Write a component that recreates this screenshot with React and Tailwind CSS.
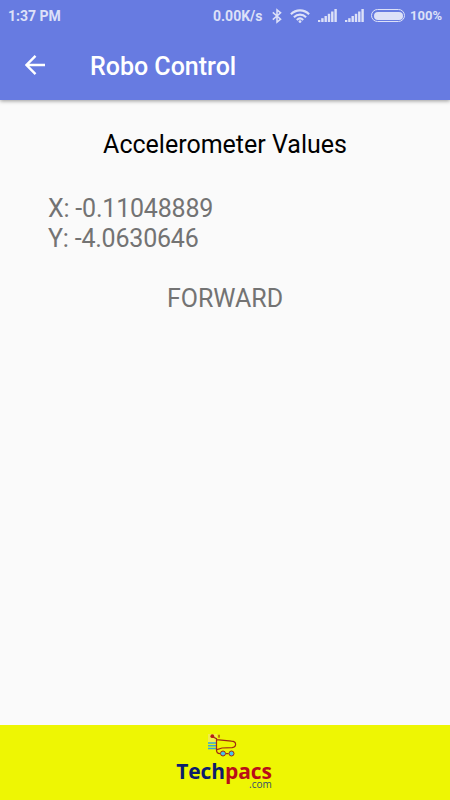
const BluetoothIcon = () => (
  <svg width="10" height="16" viewBox="0 0 10 16" fill="none" stroke="currentColor" strokeWidth="1.5">
    <path d="M0.8 4.4 8.6 11.2 5 14.2V1.8L8.6 4.8 0.8 11.6" />
  </svg>
);

const WifiIcon = () => (
  <svg width="20" height="14" viewBox="0 0 20 14" fill="none" stroke="currentColor" strokeWidth="2.1">
    <path d="M0.9 5.2C6 0.1 14 0.1 19.1 5.2" />
    <path d="M3.9 8.2C7.4 4.8 12.6 4.8 16.1 8.2" />
    <path d="M6.8 10.9C8.7 9.1 11.3 9.1 13.2 10.9" />
    <circle cx="10" cy="12.6" r="1.4" fill="currentColor" stroke="none" />
  </svg>
);

const SignalIcon = () => (
  <svg width="19" height="13" viewBox="0 0 19 13" fill="currentColor">
    <rect x="0" y="11" width="2.3" height="2" />
    <rect x="3.2" y="9.2" width="2.4" height="3.8" />
    <rect x="6.5" y="7" width="2.4" height="6" />
    <rect x="9.8" y="4.8" width="2.4" height="8.2" />
    <rect x="13.1" y="2.5" width="2.4" height="10.5" />
    <rect x="16.4" y="0" width="2.4" height="13" />
  </svg>
);

const BatteryIcon = () => (
  <div className="h-[13px] w-[34px] rounded-full border border-[#dde1f8] p-[1.5px]">
    <div className="h-full w-full rounded-full bg-[#dde1f8]" />
  </div>
);

const StatusBar = () => (
  <div className="flex h-[31px] items-center pl-2 text-[14px] font-bold text-[#dde1f8]">
    <span className="w-[205px] leading-none">1:37 PM</span>
    <span className="w-[59px] leading-none">0.00K/s</span>
    <BluetoothIcon />
    <div className="ml-2 flex items-center">
      <WifiIcon />
      <div className="ml-2 flex gap-2">
        <SignalIcon />
        <SignalIcon />
      </div>
    </div>
    <div className="ml-[7px]">
      <BatteryIcon />
    </div>
    <span className="ml-[5px] text-[13px] leading-none">100%</span>
  </div>
);

const AppBar = () => (
  <div className="flex h-[68px] items-center pl-[25px] text-white">
    <svg width="20" height="20" viewBox="0 0 20 20" fill="none" stroke="currentColor" strokeWidth="2.4">
      <path d="M20 10H2M10.5 0.9 1.5 10l9 9.1" />
    </svg>
    <h1 className="ml-[45px] pt-1 text-[25px] font-medium leading-[30px]">Robo Control</h1>
  </div>
);

const CartLogo = () => (
  <svg width="30" height="24" viewBox="0 0 30 24" fill="none">
    <rect x="1" y="1" width="9" height="9" fill="#f2ee4b" />
    <path d="M1 10h9M1 12.7h9M1 15.5h9" stroke="#35a9dc" strokeWidth="1.5" />
    <path
      d="M5.5 3.8 9.5 5.6V17c0 2.6 1.2 3.6 3.6 3.6M9.5 6.6 24.5 8.2c5.4 0.2 5.4 5.6 0.5 6.4l-10 0.4-5 1.6M19 20.6h2.6M12 1.8v3"
      stroke="#a12b12"
      strokeWidth="1.2"
    />
    <circle cx="5.3" cy="3.2" r="1.9" fill="#b51d16" />
    <circle cx="16" cy="20.5" r="2.5" fill="#45c0ee" stroke="#a12b12" strokeWidth="1" />
    <circle cx="24.5" cy="20.5" r="2.5" fill="#45c0ee" stroke="#a12b12" strokeWidth="1" />
  </svg>
);

const Footer = () => (
  <footer className="flex h-[75px] flex-col items-center bg-[#eef603] pt-2 font-['Open_Sans',sans-serif]">
    <div className="mr-[6px]">
      <CartLogo />
    </div>
    <div className="relative mr-[2px] text-[21px] font-bold leading-[29px] tracking-[-0.1px]">
      <span className="text-[#0c1c6c]">Tech</span>
      <span className="text-[#b90d18]">pacs</span>
      <span className="absolute right-0 top-[21px] text-[10px] font-normal leading-3 tracking-normal text-[#344c6c]">
        .com
      </span>
    </div>
  </footer>
);

const App = () => (
  <div className="flex h-[800px] w-[450px] flex-col overflow-hidden bg-[#fafafa] font-['Roboto',sans-serif]">
    <header className="relative h-[100px] shrink-0 bg-[#677be1] shadow-[0_1px_4px_rgba(0,0,0,0.4)]">
      <StatusBar />
      <AppBar />
    </header>

    <main className="flex-1 pt-[30px] text-[25px] leading-[29.5px] text-[#737373]">
      <h2 className="text-center text-black">Accelerometer Values</h2>
      <div className="mt-[34.5px] pl-12 tracking-[-0.2px]">
        <p>X: -0.11048889</p>
        <p>Y: -4.0630646</p>
      </div>
      <p className="mt-[30.5px] text-center">FORWARD</p>
    </main>

    <Footer />
  </div>
);

export default App;
